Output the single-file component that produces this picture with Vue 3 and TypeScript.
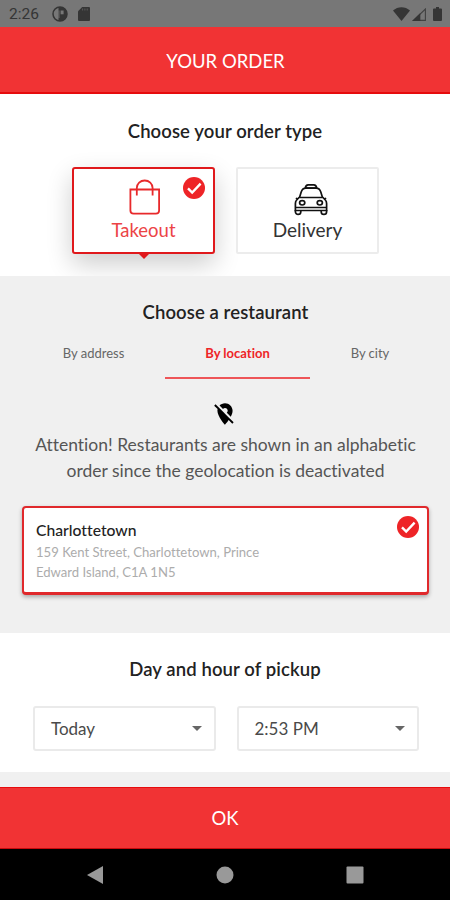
<script setup lang="ts">
import { ref } from 'vue'

const orderType = ref<'takeout' | 'delivery'>('takeout')
const tabs: string[] = ['By address', 'By location', 'By city']
const activeTab = ref<number>(1)
const selects: string[] = ['Today', '2:53 PM']
</script>

<template>
  <div class="screen">
    <div class="status">
      <span class="clock">2:26</span>
      <svg class="s-app" viewBox="0 0 16 16">
        <circle cx="8" cy="8" r="7" fill="none" stroke="#353535" stroke-width="1.5" />
        <path d="M6.5 1h1.500a7 7 0 0 1 0 14H6.500z" fill="#353535" />
        <path d="M8.600 4.500h3v3.800h-3z" fill="#777" />
        <path d="M6.600 4.500h.8v7.500h-.8z" fill="#777" />
      </svg>
      <svg class="s-sd" viewBox="0 0 12 14">
        <path d="M4.2 0H11a1 1 0 0 1 1 1v12a1 1 0 0 1-1 1H1a1 1 0 0 1-1-1V4.2z" fill="#353535" />
        <path d="M4.6 1.5v2M6.9 1.5v2M9.2 1.5v2" stroke="#5a5a5a" stroke-width="1" />
      </svg>
      <span class="grow"></span>
      <svg class="s-wifi" viewBox="0 0 17 14">
        <path d="M0 3.6C4.8-1 12.2-1 17 3.6L8.5 14z" fill="#353535" />
      </svg>
      <svg class="s-cell" viewBox="0 0 14 13">
        <path d="M1.6 12.4L13.4 1v11.4z" fill="none" stroke="#414141" stroke-width="1.1" />
        <path d="M0 13L8.3 5v8z" fill="#353535" />
      </svg>
      <svg class="s-batt" viewBox="0 0 9 14">
        <path d="M3 0h3v1.5h2a1 1 0 0 1 1 1V13a1 1 0 0 1-1 1H1a1 1 0 0 1-1-1V2.5a1 1 0 0 1 1-1h2z" fill="#353535" />
      </svg>
    </div>

    <header class="bar">YOUR ORDER</header>

    <section class="type">
      <h2>Choose your order type</h2>
      <div class="cards">
        <div class="card" :class="{ selected: orderType === 'takeout' }" @click="orderType = 'takeout'">
          <svg class="icon bag" viewBox="0 0 36 38" fill="none" stroke="currentColor" stroke-width="1.8">
            <path d="M3.4 11.5h28.7v21a3.2 3.2 0 0 1-3.2 3.2H6.6a3.2 3.2 0 0 1-3.2-3.2z" />
            <path d="M9.8 17.5V10a7.9 7.5 0 0 1 15.8 0v7.500" />
          </svg>
          <span class="label takeout">Takeout</span>
          <svg v-if="orderType === 'takeout'" class="check" viewBox="0 0 22 22">
            <circle cx="11" cy="11" r="11" fill="#ee2427" />
            <path d="M5 11.3l4.2 4.2 8.4-8.8" fill="none" stroke="#fff" stroke-width="2.4" />
          </svg>
        </div>
        <div class="card" :class="{ selected: orderType === 'delivery' }" @click="orderType = 'delivery'">
          <svg class="icon cab" viewBox="0 0 36 38" fill="none" stroke="currentColor" stroke-width="1.7" stroke-linejoin="round">
            <path d="M12.3 10.200c.3-2.400 1.200-3.400 2.900-3.400h5.600c1.700 0 2.600 1 2.900 3.400z" />
            <path d="M6.500 19.500l1.700-5.500c1-2.800 2.300-3.800 4.600-3.800h10.400c2.300 0 3.600 1 4.600 3.800l1.700 5.500" />
            <path d="M2.400 32.500V25.500c0-1.500.4-2.600 1.300-3.500L6 19.500h24l2.300 2.500c.9.9 1.300 2 1.300 3.500v7z" />
            <ellipse cx="9.200" cy="24.800" rx="2.600" ry="2.200" />
            <ellipse cx="26.800" cy="24.800" rx="2.600" ry="2.200" />
            <path d="M2.400 29.500h31.200M2.400 32v1.700a2.700 2.700 0 0 0 5.400 0V32M33.600 32v1.700a2.700 2.700 0 0 1-5.400 0V32" />
            <path d="M2.800 20.200l2 .8M33.200 20.200l-2 .8" />
          </svg>
          <span class="label delivery">Delivery</span>
        </div>
      </div>
    </section>

    <section class="restaurant">
      <h2>Choose a restaurant</h2>
      <nav class="tabs">
        <div v-for="(tab, i) in tabs" :key="tab" class="tab" :class="{ active: i === activeTab }" @click="activeTab = i">{{ tab }}</div>
      </nav>
      <svg class="pin" viewBox="0 0 24 24">
        <path d="M12 6.5c1.38 0 2.5 1.12 2.5 2.5 0 .74-.33 1.39-.83 1.85l3.63 3.63c.98-1.86 1.7-3.8 1.7-5.48 0-3.87-3.13-7-7-7-1.98 0-3.76.83-5.04 2.15l3.19 3.19c.46-.52 1.11-.84 1.85-.84zm4.37 9.6l-4.63-4.63-.11-.11L3.27 3 2 4.27l3.18 3.18C5.07 7.95 5 8.47 5 9c0 5.25 7 13 7 13s1.67-1.85 3.38-4.35L18.73 21 20 19.73l-3.63-3.63z" />
      </svg>
      <p class="notice">Attention! Restaurants are shown in an alphabetic<br />order since the geolocation is deactivated</p>
      <div class="place">
        <div class="place-text">
          <div class="name">Charlottetown</div>
          <div class="addr">159 Kent Street, Charlottetown, Prince<br />Edward Island, C1A 1N5</div>
        </div>
        <svg class="check" viewBox="0 0 22 22">
          <circle cx="11" cy="11" r="11" fill="#ee2427" />
          <path d="M5 11.3l4.2 4.2 8.4-8.8" fill="none" stroke="#fff" stroke-width="2.4" />
        </svg>
      </div>
    </section>

    <section class="pickup">
      <h2>Day and hour of pickup</h2>
      <div class="selects">
        <div v-for="s in selects" :key="s" class="select">
          <span>{{ s }}</span>
          <svg class="caret" viewBox="0 0 10 5"><path d="M0 0h10L5 5z" fill="#666" /></svg>
        </div>
      </div>
    </section>

    <footer class="ok">OK</footer>

    <div class="nav">
      <svg viewBox="0 0 18 18"><path d="M17 0v18L1 9z" fill="#999" /></svg>
      <svg viewBox="0 0 18 18"><circle cx="9" cy="9" r="8.5" fill="#999" /></svg>
      <svg viewBox="0 0 18 18"><rect x="0.5" y="0.5" width="17" height="17" rx="1" fill="#999" /></svg>
    </div>
  </div>
</template>

<style>
body {
  margin: 0;
}
</style>

<style scoped>
.screen {
  width: 450px;
  height: 900px;
  display: flex;
  flex-direction: column;
  background: #f0f0f0;
  font-family: Lato, sans-serif;
  font-variant-ligatures: none;
  color: #222;
  overflow: hidden;
}
.screen > * {
  flex: none;
  box-sizing: border-box;
}
svg {
  display: block;
  flex: none;
}
.status {
  height: 27px;
  background: #777;
  display: flex;
  align-items: center;
  padding: 1px 8px 0 9px;
}
.clock {
  font: 15.5px/26px Roboto, sans-serif;
  color: #353535;
  width: 43px;
}
.s-app {
  width: 16px;
  height: 16px;
  margin-right: 10px;
}
.s-sd {
  width: 12px;
  height: 14px;
}
.grow {
  flex: 1;
}
.s-wifi {
  width: 17px;
  height: 14px;
  margin-right: 2px;
}
.s-cell {
  width: 14px;
  height: 13px;
  margin-right: 7px;
}
.s-batt {
  width: 9px;
  height: 14px;
}
.bar {
  height: 67px;
  background: #f13334;
  border-bottom: 2px solid #e60b0d;
  color: #fff;
  font-size: 18.5px;
  line-height: 68px;
  text-align: center;
  padding-left: 1px;
}
h2 {
  margin: 0;
  font-size: 18.5px;
  line-height: 24px;
  font-weight: 600;
  letter-spacing: 0.1px;
  text-align: center;
}
.type {
  height: 182px;
  background: #fff;
  padding-top: 25px;
  overflow: hidden;
}
.cards {
  display: flex;
  gap: 21px;
  padding: 24px 0 0 72px;
}
.card {
  position: relative;
  box-sizing: border-box;
  width: 143px;
  height: 87px;
  border: 2px solid #ececec;
  border-radius: 2px;
  background: #fff;
  display: flex;
  flex-direction: column;
  align-items: center;
  padding-top: 9px;
}
.card.selected {
  border-color: #e0191c;
  border-radius: 3px;
  color: #e8292b;
  box-shadow: 0 10px 26px rgba(0, 0, 0, 0.2);
}
.card.selected::after {
  content: '';
  position: absolute;
  left: 64px;
  top: 84px;
  border: 6px solid transparent;
  border-top-color: #e0191c;
  border-bottom: 0;
}
.icon {
  width: 36px;
  height: 38px;
}
.bag {
  margin-left: 3px;
}
.cab {
  margin-left: 6px;
  color: #111;
}
.label {
  font-size: 19px;
  line-height: 24px;
  margin-top: 2px;
  color: #333;
}
.selected .label {
  font-size: 18.5px;
  color: #ec4446;
}
.card .check {
  position: absolute;
  right: 8px;
  top: 8px;
}
.check {
  width: 22px;
  height: 22px;
}
.restaurant {
  height: 357px;
  background: #f0f0f0;
  padding: 24px 21px 0 22px;
}
.tabs {
  display: flex;
  height: 55px;
}
.tab {
  box-sizing: border-box;
  flex: 0 0 143px;
  text-align: center;
  font-size: 13px;
  line-height: 16px;
  color: #666;
  padding-top: 21px;
}
.tab:last-child {
  flex-basis: 120px;
}
.tab.active {
  flex-basis: 145px;
  color: #ee2427;
  font-weight: 700;
  border-bottom: 2px solid #ee5558;
}
.pin {
  width: 26px;
  height: 26px;
  margin: 22px 0 0 190px;
}
.notice {
  margin: 5px -10px 0;
  text-align: center;
  font-size: 17.5px;
  line-height: 26px;
  color: #555;
}
.place {
  box-sizing: border-box;
  height: 89px;
  margin-top: 22px;
  border: 2px solid #e0292c;
  border-bottom-width: 3px;
  border-radius: 4px;
  background: #fff;
  box-shadow: 0 2px 4px rgba(0, 0, 0, 0.3);
  display: flex;
  justify-content: space-between;
  padding: 8px 8px 0 12px;
}
.name {
  font-size: 15.7px;
  line-height: 28px;
  font-weight: 500;
}
.addr {
  font-size: 13.1px;
  line-height: 20px;
  margin-top: -2px;
  color: #acacac;
}
.pickup {
  height: 139px;
  background: #fff;
  padding-top: 24px;
}
.selects {
  display: flex;
  gap: 21px;
  padding: 25px 31px 0 33px;
}
.select {
  box-sizing: border-box;
  flex: 1;
  height: 45px;
  border: 2px solid #eaeaea;
  border-radius: 3px;
  display: flex;
  align-items: center;
  justify-content: space-between;
  padding: 0 12px 0 16px;
  font-size: 17px;
  color: #4a4a4a;
}
.caret {
  width: 10px;
  height: 5px;
}
.ok {
  margin-top: 15px;
  height: 62px;
  background: #f13334;
  border-top: 1px solid #e60b0d;
  border-bottom: 1px solid #c80b0d;
  color: #fff;
  font-size: 18.5px;
  line-height: 61px;
  text-align: center;
}
.nav {
  flex: 1;
  background: #000;
  display: flex;
  gap: 112px;
  padding: 17px 0 0 86px;
}
.nav svg {
  width: 18px;
  height: 18px;
}
</style>
